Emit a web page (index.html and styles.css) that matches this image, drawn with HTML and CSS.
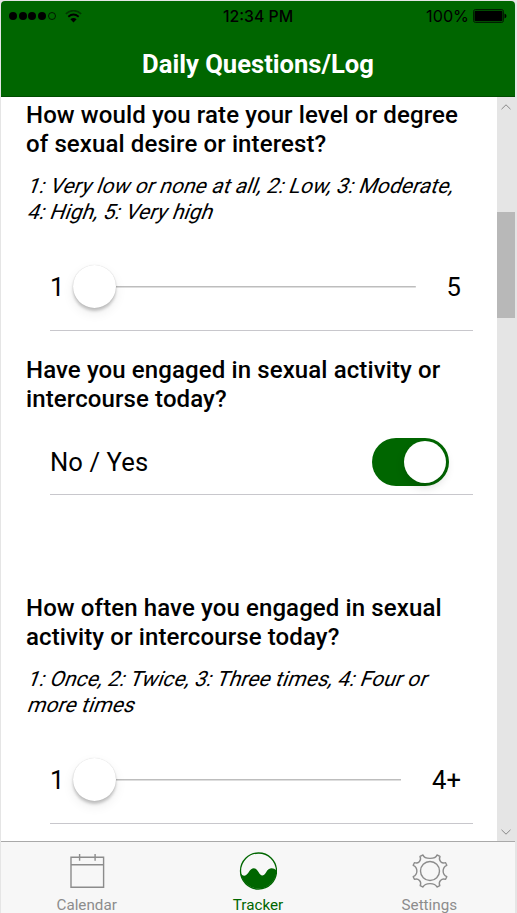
FILE: index.html
```html
<!DOCTYPE html>
<html lang="en">
<head>
<meta charset="utf-8">
<title>Daily Questions/Log</title>
<link rel="stylesheet" href="styles.css">
</head>
<body>
<div class="phone">
  <header class="header">
    <div class="status">
      <div class="signal">
        <i class="dot"></i><i class="dot"></i><i class="dot"></i><i class="dot"></i><i class="dot empty"></i>
        <svg class="wifi" width="17" height="13" viewBox="0 0 17 13" fill="none" stroke="#000">
          <path d="M.8 3.9Q8.5-2.5 16.2 3.9" stroke-width="1.7" opacity=".45"/>
          <path d="M3.3 6.8Q8.5 2.4 13.7 6.8" stroke-width="1.9"/>
          <path d="M5.4 9.2Q8.5 6.6 11.6 9.2L8.5 12.5Z" fill="#000" stroke="none"/>
        </svg>
      </div>
      <span class="time">12:34 PM</span>
      <div class="power">
        <span class="percent">100%</span>
        <svg width="34" height="14" viewBox="0 0 34 14">
          <rect x=".5" y=".5" width="30" height="13" rx="2" fill="none" stroke="#000" stroke-opacity=".7"/>
          <rect x="1.5" y="1.8" width="28" height="10.4" rx="1" fill="#000"/>
          <path d="M31.5 4.5Q33.5 5.2 33.5 7T31.5 9.5Z" fill="#000"/>
        </svg>
      </div>
    </div>
    <h1 class="title">Daily Questions/Log</h1>
  </header>

  <div class="viewport">
    <main class="content">
      <section class="question">
        <h2>How would you rate your level or degree<br>of sexual desire or interest?</h2>
        <p class="hint"><span>1: Very low or none at all, 2: Low, 3: Moderate,</span><span>4: High, 5: Very high</span></p>
        <div class="row slider">
          <span class="min">1</span>
          <div class="track"><div class="knob"></div></div>
          <span class="max">5</span>
        </div>
      </section>
      <section class="question activity">
        <h2>Have you engaged in sexual activity or<br>intercourse today?</h2>
        <div class="row choice">
          <span class="answer">No / Yes</span>
          <div class="toggle"><div class="knob"></div></div>
        </div>
      </section>
      <section class="question">
        <h2>How often have you engaged in sexual<br>activity or intercourse today?</h2>
        <p class="hint"><span>1: Once, 2: Twice, 3: Three times, 4: Four or</span><span>more times</span></p>
        <div class="row slider">
          <span class="min">1</span>
          <div class="track"><div class="knob"></div></div>
          <span class="max">4+</span>
        </div>
      </section>
    </main>
    <div class="scrollbar">
      <svg width="10" height="6" viewBox="0 0 10 6"><path d="M.5 5.2 5 .8 9.5 5.2"/></svg>
      <div class="thumb"></div>
      <svg class="down" width="10" height="6" viewBox="0 0 10 6"><path d="M.5.8 5 5.2 9.5.8"/></svg>
    </div>
  </div>

  <nav class="tabs">
    <div class="tab">
      <svg width="38" height="38" viewBox="0 0 38 38" fill="none" stroke="#8c8c8c" stroke-width="1.4">
        <path d="M3 5.3H35.6V35.3H3ZM3 12.7H35.6M11.6 2V8.8M27.1 2V8.8"/>
      </svg>
      <span>Calendar</span>
    </div>
    <div class="tab active">
      <svg width="38" height="38" viewBox="0 0 38 38">
        <circle cx="19.5" cy="19" r="18" fill="none" stroke="#006600" stroke-width="1.3"/>
        <path d="M1.5 20.5C3.5 25 7 24.5 9.5 20.5C13 15 16.5 15 19.5 20C21.8 24.5 24.5 24.5 27 20.5C29.5 15.7 34 15 37.4 18.5A18 18 0 0 1 1.5 20.5Z" fill="#006600"/>
      </svg>
      <span>Tracker</span>
    </div>
    <div class="tab">
      <svg width="38" height="38" viewBox="-1 0 38 38" fill="none" stroke="#8c8c8c" stroke-width="1.4" stroke-linejoin="round">
        <circle cx="19" cy="19" r="9.5"/>
        <path d="M12 3C13.5 7.5 24.5 7.5 26 3L29 4.4C27 8.8 31 12.1 34.6 10.7L35.8 13.3C30.9 15.5 30.9 22.5 35.8 24.7L34.6 27.3C30.5 26 27 29.5 28.8 33.7L26 35C24 30.5 14 30.5 12 35L9.2 33.7C11 29.5 7.5 26 3.4 27.3L2.2 24.7C7.1 22.5 7.1 15.5 2.2 13.3L3.4 10.7C7 12.1 11 8.8 9 4.4Z"/>
      </svg>
      <span>Settings</span>
    </div>
  </nav>
</div>
</body>
</html>
```
FILE: styles.css
```css
* { box-sizing: border-box; }
body {
  margin: 0;
  background: #e5e5e5;
  font-family: Roboto, "Liberation Sans", sans-serif;
  color: #000;
  overflow: hidden;
}
.phone {
  width: 517px;
  height: 913px;
  padding: 1px 2px 0 1px;
  display: flex;
  flex-direction: column;
}
.header {
  height: 96px;
  flex: none;
  background: #006600;
  border-bottom: 1px solid #004d00;
  border-radius: 4px 4px 0 0;
}
.status {
  height: 30px;
  padding: 0 8px;
  display: grid;
  grid-template-columns: 1fr auto 1fr;
  align-items: center;
  font-family: Inter, sans-serif;
  font-size: 16px;
}
.signal { display: flex; align-items: center; gap: 1.7px; }
.dot { width: 8px; height: 8px; border-radius: 50%; background: #000; }
.dot.empty { background: none; border: 1px solid #000; opacity: .75; }
.wifi { margin-left: 8px; }
.time { font-weight: 500; font-size: 15.8px; }
.power { display: flex; justify-content: flex-end; align-items: center; gap: 4px; }
.percent { font-size: 16.2px; }
.title {
  margin: 18px 0 0;
  text-align: center;
  font-size: 25.6px;
  line-height: 30px;
  font-weight: 700;
  color: #fff;
}
.viewport { height: 744px; flex: none; display: flex; background: #fff; overflow: hidden; }
.content { flex: 1; padding: 4px 24px 0 25px; }
h2 {
  margin: 0;
  font-size: 24px;
  line-height: 29px;
  letter-spacing: .11px;
  font-weight: 500;
  white-space: nowrap;
}
.hint {
  margin: 14px 0 0;
  font-size: 21px;
  line-height: 26px;
  letter-spacing: .08px;
  white-space: nowrap;
}
.hint span {
  display: block;
  transform: skewX(-20deg);
  transform-origin: 0 80%;
}
.row {
  margin-left: 24px;
  display: flex;
  align-items: center;
  border-bottom: 1.5px solid #c8c7cc;
  font-size: 25.6px;
}
.slider { height: 88px; margin-top: 18px; padding-right: 12px; }
.min { width: 23px; flex: none; }
.min, .max, .answer { padding-top: 1px; }
.answer { letter-spacing: .1px; }
.track {
  flex: 1;
  height: 44px;
  margin-right: 31px;
  background: linear-gradient(#bdbdbd, #bdbdbd) center / 100% 1.5px no-repeat;
}
.knob {
  width: 43px;
  height: 43px;
  border-radius: 50%;
  background: #fff;
  box-shadow: 0 3px 3px rgba(0, 0, 0, .2), 0 5px 12px rgba(0, 0, 0, .08), 0 0 1px rgba(0, 0, 0, .2);
}
.activity { margin: 25px 0 99px; }
.choice { height: 81px; padding: 16px 24px 0 0; justify-content: space-between; }
.answer { padding-top: 0; }
.toggle {
  width: 77px;
  height: 48px;
  padding: 3px;
  display: flex;
  justify-content: flex-end;
  border-radius: 25px;
  background: #006600;
}
.toggle .knob {
  width: 42px;
  height: 42px;
  box-shadow: 0 4px 10px rgba(0, 0, 0, .15);
}
.scrollbar {
  width: 18px;
  padding: 7px 0 6px;
  display: flex;
  flex-direction: column;
  align-items: center;
  background: #e5e5e5;
}
.scrollbar path { fill: none; stroke: #888; stroke-width: 1; }
.thumb { width: 18px; height: 106px; margin-top: 102px; background: #b8b8b8; }
.down { margin-top: auto; }
.tabs {
  flex: 1;
  display: grid;
  grid-template-columns: repeat(3, 1fr);
  border-top: 1px solid #a9a9a9;
  background: #f7f7f7;
}
.tab {
  display: flex;
  flex-direction: column;
  align-items: center;
  padding-top: 10px;
  font-size: 15.2px;
  line-height: 20px;
  color: #8c8c8c;
}
.tab svg { flex: none; margin-bottom: 5px; }
.tab.active { color: #006600; }
```
